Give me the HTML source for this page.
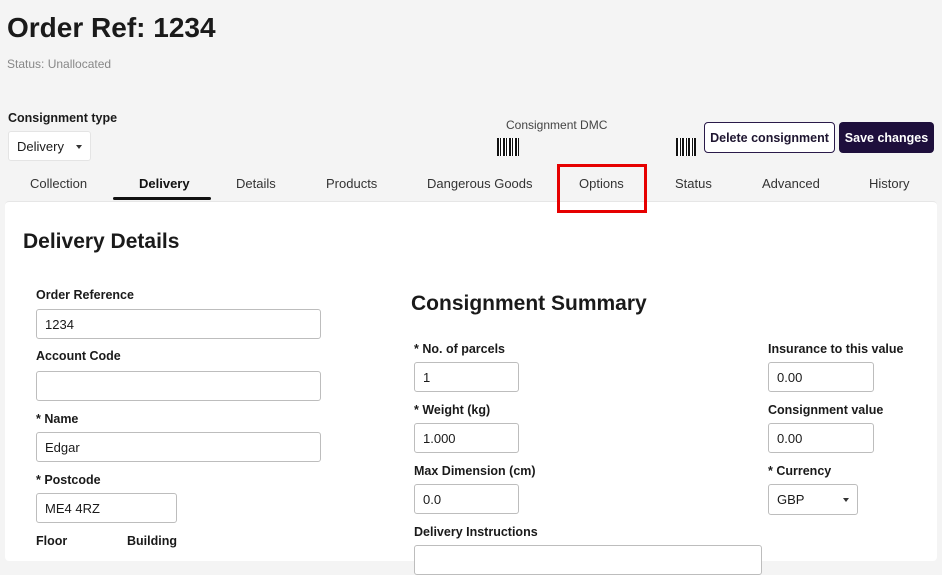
<!DOCTYPE html>
<html><head><style>
*{box-sizing:border-box;margin:0;padding:0}
body{width:942px;height:548px;overflow:hidden;background:#f4f4f4;font-family:"Liberation Sans",sans-serif;color:#1a1a1a;position:relative}
.a{position:absolute;white-space:nowrap}
.inp{position:absolute;background:#fff;border:1px solid #bdbdbd;border-radius:3px;font-size:13px;padding-left:8px;display:flex;align-items:center}
.lbl{position:absolute;font-size:12.5px;font-weight:bold;white-space:nowrap}
.tab{position:absolute;top:176px;font-size:13px;color:#333}
</style></head><body>
<div class="a" style="left:7px;top:12px;font-size:28px;font-weight:bold">Order Ref: 1234</div>
<div class="a" style="left:7px;top:57px;font-size:12px;color:#888">Status: Unallocated</div>
<div class="lbl" style="left:8px;top:111px">Consignment type</div>
<div class="inp" style="left:8px;top:131px;width:83px;height:30px;border-color:#e4e4e4">Delivery<span style="position:absolute;right:8px;top:13px;border:3px solid transparent;border-top:4px solid #333"></span></div>
<div class="a" style="left:506px;top:118px;font-size:12px;color:#444">Consignment DMC</div>
<div class="a" style="left:497px;top:138px;width:22px;height:18px;background:repeating-linear-gradient(90deg,#111 0 2px,#fff 2px 3px,#111 3px 4px,#fff 4px 6px)"></div>
<div class="a" style="left:676px;top:138px;width:20px;height:18px;background:repeating-linear-gradient(90deg,#111 0 2px,#fff 2px 4px,#111 4px 5px,#fff 5px 6px)"></div>
<div class="a" style="left:704px;top:122px;width:131px;height:31px;border:1px solid #2a1a4a;border-radius:4px;background:#fff;font-size:12.5px;font-weight:bold;display:flex;align-items:center;justify-content:center;color:#1e1530">Delete consignment</div>
<div class="a" style="left:839px;top:122px;width:95px;height:31px;background:#1e0f3c;border-radius:4px;color:#fff;font-size:12.5px;font-weight:bold;display:flex;align-items:center;justify-content:center">Save changes</div>
<div class="tab" style="left:30px">Collection</div>
<div class="tab" style="left:139px;font-weight:bold;color:#111">Delivery</div>
<div class="a" style="left:113px;top:197px;width:98px;height:3px;background:#111;border-radius:2px"></div>
<div class="tab" style="left:236px">Details</div>
<div class="tab" style="left:326px">Products</div>
<div class="tab" style="left:427px">Dangerous Goods</div>
<div class="tab" style="left:579px">Options</div>
<div class="tab" style="left:675px">Status</div>
<div class="tab" style="left:762px">Advanced</div>
<div class="tab" style="left:869px">History</div>
<div class="a" style="left:5px;top:201px;width:932px;height:360px;background:#fff;border-top:1px solid #e6e6e6;border-radius:4px"></div>
<div class="a" style="left:557px;top:164px;width:90px;height:49px;border:3px solid #e60000"></div>
<div class="a" style="left:23px;top:230px;font-size:21px;font-weight:bold">Delivery Details</div>
<div class="lbl" style="left:36px;top:288px">Order Reference</div>
<div class="inp" style="left:36px;top:309px;width:285px;height:30px">1234</div>
<div class="lbl" style="left:36px;top:349px">Account Code</div>
<div class="inp" style="left:36px;top:371px;width:285px;height:30px"></div>
<div class="lbl" style="left:36px;top:412px">* Name</div>
<div class="inp" style="left:36px;top:432px;width:285px;height:30px">Edgar</div>
<div class="lbl" style="left:36px;top:473px">* Postcode</div>
<div class="inp" style="left:36px;top:493px;width:141px;height:30px">ME4 4RZ</div>
<div class="lbl" style="left:36px;top:534px">Floor</div>
<div class="lbl" style="left:127px;top:534px">Building</div>
<div class="a" style="left:411px;top:292px;font-size:21px;font-weight:bold">Consignment Summary</div>
<div class="lbl" style="left:414px;top:342px">* No. of parcels</div>
<div class="inp" style="left:414px;top:362px;width:105px;height:30px">1</div>
<div class="lbl" style="left:414px;top:403px">* Weight (kg)</div>
<div class="inp" style="left:414px;top:423px;width:105px;height:30px">1.000</div>
<div class="lbl" style="left:414px;top:464px">Max Dimension (cm)</div>
<div class="inp" style="left:414px;top:484px;width:105px;height:30px">0.0</div>
<div class="lbl" style="left:414px;top:525px">Delivery Instructions</div>
<div class="inp" style="left:414px;top:545px;width:348px;height:30px"></div>
<div class="lbl" style="left:768px;top:342px">Insurance to this value</div>
<div class="inp" style="left:768px;top:362px;width:106px;height:30px">0.00</div>
<div class="lbl" style="left:768px;top:403px">Consignment value</div>
<div class="inp" style="left:768px;top:423px;width:106px;height:30px">0.00</div>
<div class="lbl" style="left:768px;top:464px">* Currency</div>
<div class="inp" style="left:768px;top:484px;width:90px;height:31px">GBP<span style="position:absolute;right:8px;top:13px;border:3px solid transparent;border-top:4px solid #333"></span></div>
</body></html>
